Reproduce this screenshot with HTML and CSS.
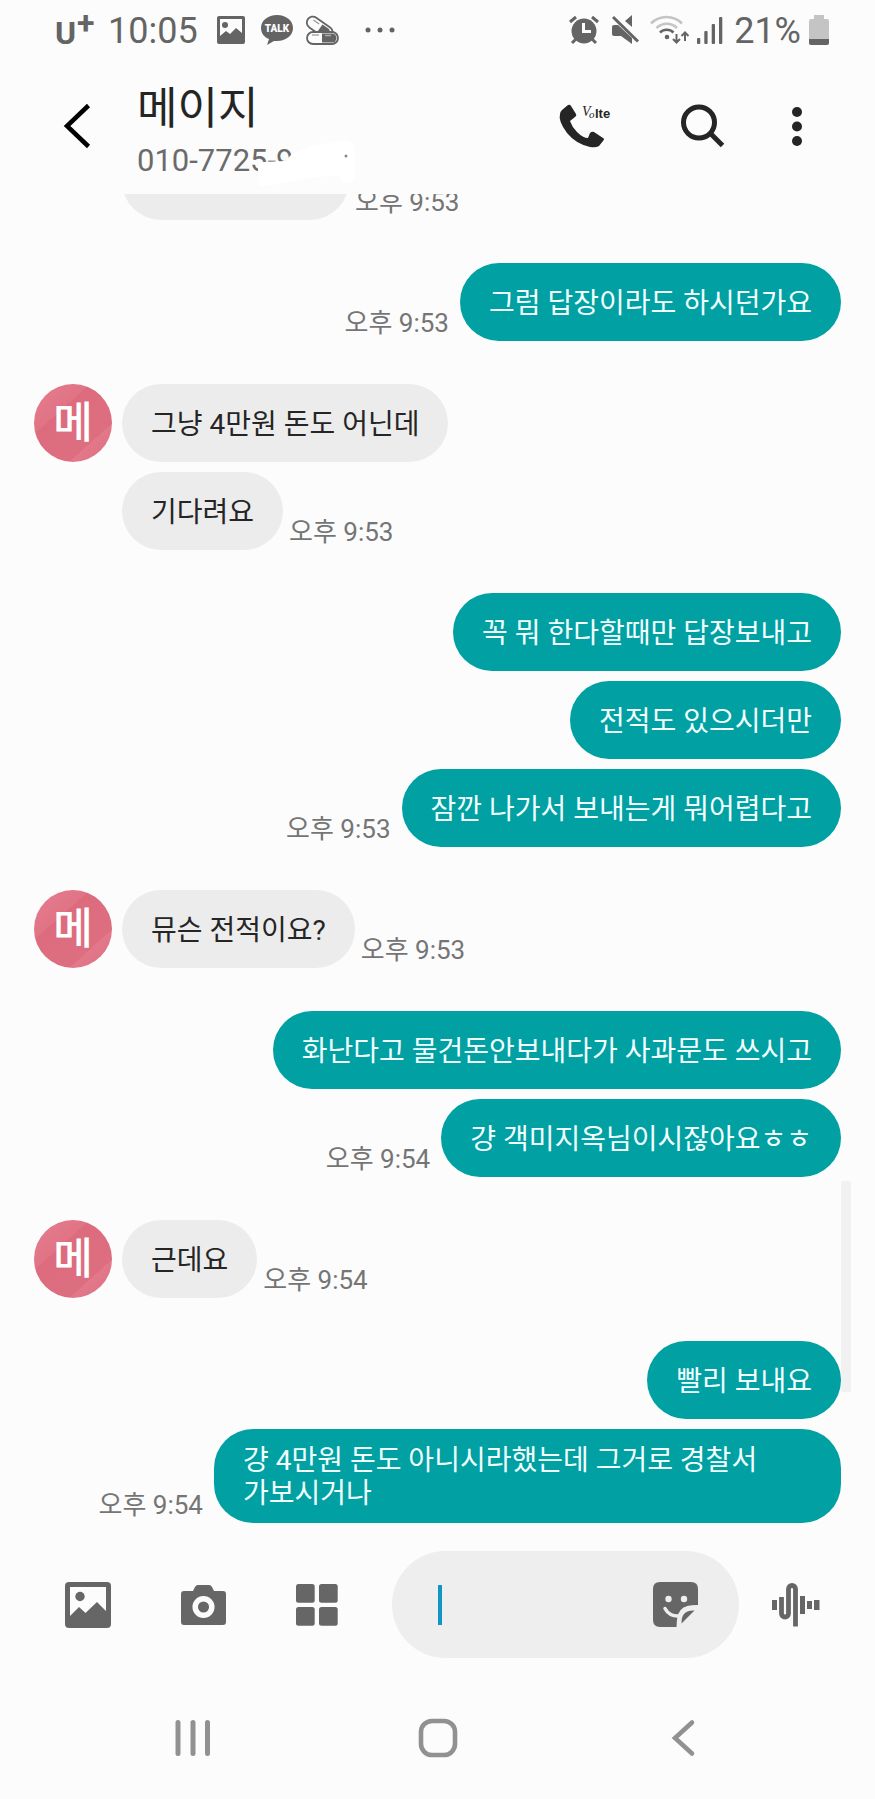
FILE: index.html
```html
<!DOCTYPE html>
<html lang="ko">
<head>
    <meta charset="UTF-8">
    <meta name="viewport" content="width=device-width, initial-scale=1.0">
    <title>메이지</title>
    <link rel="stylesheet" href="styles.css">
</head>
<body>
    <div class="status">
        <div class="status-left">
            <svg class="carrier" width="40" height="32" viewBox="0 0 40 32">
                <text x="-1" y="30" font-size="32">U</text>
                <text x="21" y="20" font-size="32">+</text>
            </svg>
            <span class="status-text">10:05</span>
            <svg width="37" height="32" viewBox="-7 0 37 32">
                <rect y="2" width="28" height="28" rx="2" fill="#646464"/>
                <path d="M3 5H25V19L19 14 13 20 9 17 3 22z" fill="#fcfcfc"/>
                <circle cx="8" cy="11" r="3" fill="#646464"/>
            </svg>
            <svg class="talk" width="34" height="32" viewBox="-1 0 34 32">
                <path d="M17 1C26 1 33 6.500 33 14S26 27 17 27L14 27 7 31 9 25C4 23 1 19 1 14 1 6.500 8 1 17 1z" fill="#646464"/>
                <text x="17" y="18" font-size="10" text-anchor="middle">TALK</text>
            </svg>
            <svg width="35" height="32" viewBox="0 0 35 32">
                <g transform="rotate(35 7 8)">
                    <rect x="2" y="2" width="29" height="12" rx="6" fill="#fcfcfc" stroke="#646464" stroke-width="1.800"/>
                    <path d="M17 4H25Q29 6 29 12H17z" fill="#646464"/>
                    <path d="M7 5.500H14" stroke="#999" stroke-width="1.300"/>
                </g>
                <rect x="2" y="18" width="31" height="12" rx="6" fill="#fcfcfc" stroke="#646464" stroke-width="1.800"/>
                <path d="M17 19.500H27a4.500 4.500 0 0 1 0 9H17z" fill="#646464"/>
                <path d="M7 21H14M20 21.500H26" stroke="#aaa" stroke-width="1.300"/>
            </svg>
            <svg width="45" height="32" viewBox="0 0 45 32" fill="#646464">
                <circle cx="16" cy="16" r="2.500"/>
                <circle cx="28" cy="16" r="2.500"/>
                <circle cx="40" cy="16" r="2.500"/>
            </svg>
        </div>
        <div class="status-right">
            <svg width="35" height="32" viewBox="0 0 35 32" fill="none" stroke="#646464" stroke-width="3">
                <circle cx="15" cy="17" r="12.500" fill="#646464" stroke="none"/>
                <path d="M1 8L7 3M23 3L29 8M7 25L3 29M23 25L27 29"/>
                <path d="M14.500 9V17.500H22" stroke="#fcfcfc"/>
            </svg>
            <svg width="29" height="32" viewBox="0 0 29 32" fill="#646464">
                <path d="M2 11H6L20 24V30L9 22H2Q0 22 0 20V13Q0 11 2 11zM20 1V13L13 7z"/>
                <path d="M1 3L26 27.500" stroke="#646464" stroke-width="3"/>
            </svg>
            <svg width="40" height="32" viewBox="0 0 40 32" fill="none" stroke-width="2.500">
                <path d="M2 9.500A22 22 0 0 1 33 9.500M7.500 14A14.500 14.500 0 0 1 28 14" stroke="#c4c4c4"/>
                <path d="M11 18.500A9.500 9.500 0 0 1 24.500 18.500" stroke="#646464"/>
                <circle cx="18" cy="23" r="2.300" fill="#646464"/>
                <path d="M27.500 20V28M24 25L27.500 28.500 31 25M36 27V19M32.500 22L36 18.500 39.500 22" stroke="#646464" stroke-width="2"/>
            </svg>
            <svg width="29" height="32" viewBox="0 0 29 32" fill="#646464">
                <rect y="24" width="3.300" height="6" rx="1"/>
                <rect x="7.300" y="17" width="3.300" height="13" rx="1"/>
                <rect x="14.700" y="10" width="3.300" height="20" rx="1"/>
                <rect x="22" y="3" width="3.300" height="27" rx="1"/>
            </svg>
            <span class="status-text">21%</span>
            <svg width="20" height="32" viewBox="0 0 20 32">
                <path d="M5 1H15V5H18Q20 5 20 7V25H0V7Q0 5 2 5H5z" fill="#c4c4c4"/>
                <path d="M0 25H20V29Q20 31 18 31H2Q0 31 0 29z" fill="#646464"/>
            </svg>
        </div>
    </div>

    <header class="header">
        <button class="icon-btn" aria-label="뒤로">
            <svg width="26" height="44" viewBox="0 0 26 44"><path d="M24.500 1.500L3 22 24.500 42.500" fill="none" stroke="#000" stroke-width="4.500"/></svg>
        </button>
        <div class="contact">
            <h1>메이지</h1>
            <p class="number">010-7725-9
                <svg class="eraser" width="110" height="50" viewBox="0 0 110 50">
                    <path d="M11 27Q11 24 16 23L38 22 45 15Q70 3 98 2 106 2 107 9L108 38Q106 46 96 44L91 36 60 39 20 47Q10 48 11 42z" fill="#fff"/>
                    <circle cx="99" cy="17" r="1.500" fill="#888"/>
                </svg>
            </p>
        </div>
        <div class="actions">
            <button class="icon-btn" aria-label="통화">
                <svg width="54" height="44" viewBox="0 0 54 44">
                    <path d="M2 6L8 1Q10 0 11 2L16 10Q17 12 15 13L10 17Q12 23 17 28 23 34 28 34L30 29Q32 27 34 28L43 34Q45 35 43 37L39 42Q36 44 30 43 16 40 7 29-2 17 0 10 0 8 2 6z" fill="#252525"/>
                    <text class="volte-v" x="22" y="12" font-size="14">V</text>
                    <text class="volte-v" x="29" y="14" font-size="11">o</text>
                    <text class="volte-lte" x="35" y="14" font-size="13">lte</text>
                </svg>
            </button>
            <button class="icon-btn" aria-label="검색">
                <svg width="44" height="44" viewBox="0 0 44 44" fill="none" stroke="#252525" stroke-width="5">
                    <circle cx="18" cy="18.500" r="15.500"/>
                    <path d="M29 29L41.500 41.500"/>
                </svg>
            </button>
            <button class="icon-btn" aria-label="더보기">
                <svg width="10" height="44" viewBox="0 0 10 44" fill="#252525">
                    <circle cx="5" cy="8" r="5"/>
                    <circle cx="5" cy="22.500" r="5"/>
                    <circle cx="5" cy="37" r="5"/>
                </svg>
            </button>
        </div>
    </header>

    <main class="chat">
        <div class="group in">
            <div class="row"><div class="bubble cut"></div><time>오후 9:53</time></div>
        </div>
        <div class="group out">
            <div class="row"><time>오후 9:53</time><div class="bubble">그럼 답장이라도 하시던가요</div></div>
        </div>
        <div class="group in">
            <div class="avatar">메</div>
            <div class="row"><div class="bubble">그냥 4만원 돈도 어닌데</div></div>
            <div class="row"><div class="bubble">기다려요</div><time>오후 9:53</time></div>
        </div>
        <div class="group out">
            <div class="row"><div class="bubble">꼭 뭐 한다할때만 답장보내고</div></div>
            <div class="row"><div class="bubble">전적도 있으시더만</div></div>
            <div class="row"><time>오후 9:53</time><div class="bubble">잠깐 나가서 보내는게 뭐어렵다고</div></div>
        </div>
        <div class="group in">
            <div class="avatar">메</div>
            <div class="row"><div class="bubble">뮤슨 전적이요?</div><time>오후 9:53</time></div>
        </div>
        <div class="group out">
            <div class="row"><div class="bubble">화난다고 물건돈안보내다가 사과문도 쓰시고</div></div>
            <div class="row"><time>오후 9:54</time><div class="bubble">걍 객미지옥님이시잖아요ㅎㅎ</div></div>
        </div>
        <div class="group in">
            <div class="avatar">메</div>
            <div class="row"><div class="bubble">근데요</div><time>오후 9:54</time></div>
        </div>
        <div class="group out">
            <div class="row"><div class="bubble">빨리 보내요</div></div>
            <div class="row"><time>오후 9:54</time><div class="bubble">걍 4만원 돈도 아니시라했는데 그거로 경찰서 가보시거나</div></div>
        </div>
        <div class="scrollbar"></div>
    </main>

    <form class="composer">
        <div class="tools">
            <button type="button" class="icon-btn" aria-label="갤러리">
                <svg width="46" height="46" viewBox="0 0 46 46">
                    <rect width="46" height="46" rx="4" fill="#666"/>
                    <path d="M5 5H41V29L32 20 20.500 31 14 25 5 34z" fill="#fcfcfc"/>
                    <circle cx="15" cy="14.500" r="4.700" fill="#666"/>
                </svg>
            </button>
            <button type="button" class="icon-btn" aria-label="카메라">
                <svg width="46" height="46" viewBox="0 0 46 46">
                    <path d="M4 9H13L15 5Q16 3 18 3H29Q31 3 32 5L34 9H43Q46 9 46 12V40Q46 43 43 43H4Q1 43 1 40V12Q1 9 4 9z" fill="#666"/>
                    <circle cx="23.500" cy="25" r="8.300" fill="#666" stroke="#fcfcfc" stroke-width="5.500"/>
                </svg>
            </button>
            <button type="button" class="icon-btn" aria-label="더보기 메뉴">
                <svg width="46" height="46" viewBox="0 0 46 46" fill="#666">
                    <rect x="1" y="2" width="18.700" height="18.700" rx="2.500"/>
                    <rect x="24" y="2" width="18.700" height="18.700" rx="2.500"/>
                    <rect x="1" y="25" width="18.700" height="18.700" rx="2.500"/>
                    <rect x="24" y="25" width="18.700" height="18.700" rx="2.500"/>
                </svg>
            </button>
        </div>
        <div class="field">
            <span class="caret"></span>
            <input type="text" class="message" aria-label="메시지 입력">
            <button type="button" class="icon-btn" aria-label="스티커">
                <svg width="46" height="46" viewBox="0 0 46 46">
                    <path d="M7 0H38Q45 0 45 7V23Q33 23 28 29 24 34 24 45H7Q0 45 0 38V7Q0 0 7 0z" fill="#666"/>
                    <circle cx="15.500" cy="17" r="3.200" fill="#eee"/>
                    <circle cx="31" cy="17" r="3.200" fill="#eee"/>
                    <path d="M12 26.500Q16 34 25 34" fill="none" stroke="#eee" stroke-width="3.500" stroke-linecap="round"/>
                    <path d="M45 25.500Q30 24 27 33 25.500 38 25.500 45" fill="none" stroke="#eee" stroke-width="4"/>
                    <path d="M28.500 41.500L41.500 28.500Q28 28 28.500 41.500z" fill="#666"/>
                </svg>
            </button>
        </div>
        <button type="button" class="icon-btn" aria-label="음성 녹음">
            <svg width="49" height="46" viewBox="0 0 49 46" fill="#666">
                <rect y="18" width="5" height="10"/>
                <path d="M9.500 15V31.500a3.500 3.500 0 0 0 7 0V7a3.500 3.500 0 0 1 7 0V44.500" fill="none" stroke="#666" stroke-width="4.800"/>
                <rect x="28" y="14" width="5" height="18"/>
                <rect x="35" y="19" width="5" height="8"/>
                <rect x="42" y="18" width="5.500" height="10"/>
            </svg>
        </button>
    </form>

    <nav class="nav">
        <button class="icon-btn" aria-label="최근 앱">
            <svg width="40" height="40" viewBox="0 0 40 40" stroke="#919191" stroke-width="5" stroke-linecap="round"><path d="M5 4.500V35.500M20 4.500V35.500M34.500 4.500V35.500"/></svg>
        </button>
        <button class="icon-btn" aria-label="홈">
            <svg width="40" height="40" viewBox="0 0 40 40"><rect x="3" y="3" width="34" height="34" rx="11" fill="none" stroke="#919191" stroke-width="4.600"/></svg>
        </button>
        <button class="icon-btn" aria-label="뒤로 가기">
            <svg width="40" height="40" viewBox="0 0 40 40"><path d="M29 4.500L12 20 29 35.500" fill="none" stroke="#919191" stroke-width="4.500" stroke-linecap="round"/></svg>
        </button>
    </nav>
</body>
</html>
```
FILE: styles.css
```css
* {
    box-sizing: border-box;
    margin: 0;
    padding: 0;
}
body {
    display: flex;
    flex-direction: column;
    height: 100vh;
    background-color: #fcfcfc;
    color: #252525;
    font-family: Roboto, "Noto Sans CJK KR", sans-serif;
}
svg {
    display: block;
    overflow: visible;
    flex: none;
}
.icon-btn {
    border: none;
    background: none;
    cursor: pointer;
}

/* status bar */
.status {
    display: flex;
    justify-content: space-between;
    padding: 14px 46px 11px 56px;
    color: #646464;
}
.status-left,
.status-right {
    display: flex;
    align-items: center;
    height: 32px;
}
.status-left {
    gap: 12px;
}
.status-right {
    gap: 8px;
}
.status-text {
    font-size: 36px;
    line-height: 32px;
    padding-top: 2px;
}
.carrier {
    fill: #646464;
    font-weight: 700;
}
.talk text {
    fill: #fcfcfc;
    font-weight: 900;
}

/* header */
.header {
    display: flex;
    align-items: center;
    height: 137px;
    padding: 0 73px 0 64px;
}
.contact {
    flex: 1;
    padding-top: 14px;
    padding-left: 47px;
}
.contact h1 {
    font-size: 44px;
    font-weight: 400;
    line-height: 52px;
    margin-bottom: 4px;
}
.number {
    position: relative;
    font-size: 31px;
    line-height: 44px;
    color: #6b6b6b;
}
.eraser {
    position: absolute;
    left: 110px;
    top: 0;
}
.actions {
    display: flex;
    align-items: center;
    gap: 67px;
}
.volte-v {
    fill: #252525;
    font-family: "Liberation Serif", serif;
    font-style: italic;
}
.volte-lte {
    fill: #252525;
    font-weight: 900;
}

/* messages */
.chat {
    position: relative;
    flex: 1;
    min-height: 0;
    display: flex;
    flex-direction: column;
    justify-content: flex-end;
    gap: 43px;
    padding: 0 34px;
    overflow: hidden;
}
.group {
    position: relative;
    display: flex;
    flex-direction: column;
    gap: 10px;
    flex: none;
}
.in {
    padding-left: 88px;
}
.row {
    display: flex;
    align-items: flex-end;
    gap: 6px;
}
.out .row {
    justify-content: flex-end;
    gap: 11px;
}
.bubble {
    display: flex;
    align-items: center;
    min-height: 78px;
    max-width: 627px;
    padding: 15px 29px 13px;
    border-radius: 39px;
    font-size: 28px;
    line-height: 33px;
    word-break: keep-all;
}
.in .bubble {
    background-color: #ececec;
}
.out .bubble {
    background-color: #00a0a3;
    color: #f2ffff;
}
.cut {
    width: 227px;
}
time {
    flex: none;
    font-size: 26px;
    line-height: 36px;
    color: #757575;
}
.avatar {
    position: absolute;
    left: 0;
    top: 0;
    width: 78px;
    height: 78px;
    border-radius: 50%;
    background: linear-gradient(138deg, #e67c8f 0%, #e07485 34%, #dc6b7e 34%, #dd6e80 74%, #e2788a 74%, #de7083 100%);
    color: #fff;
    font-size: 43px;
    font-weight: 500;
    line-height: 79px;
    text-align: center;
}
.scrollbar {
    position: absolute;
    right: 24px;
    bottom: 131px;
    width: 10px;
    height: 211px;
    border-radius: 2px;
    background-color: #f1f1f1;
}

/* input area */
.composer {
    display: flex;
    align-items: center;
    padding: 28px 54px 21px 65px;
}
.tools {
    display: flex;
    gap: 69px;
}
.field {
    flex: 1;
    min-width: 0;
    display: flex;
    align-items: center;
    height: 107px;
    margin: 0 33px 0 51px;
    padding: 0 40px 0 46px;
    border-radius: 54px;
    background-color: #eee;
}
.caret {
    width: 4px;
    height: 40px;
    background-color: #1196c4;
}
.message {
    flex: 1;
    min-width: 0;
    height: 60px;
    border: none;
    outline: none;
    background: none;
    font-family: inherit;
    font-size: 28px;
}

/* system navigation */
.nav {
    display: grid;
    grid-template-columns: repeat(3, 1fr);
    justify-items: center;
    align-items: center;
    height: 120px;
    padding: 0 70px 2px;
}
```
